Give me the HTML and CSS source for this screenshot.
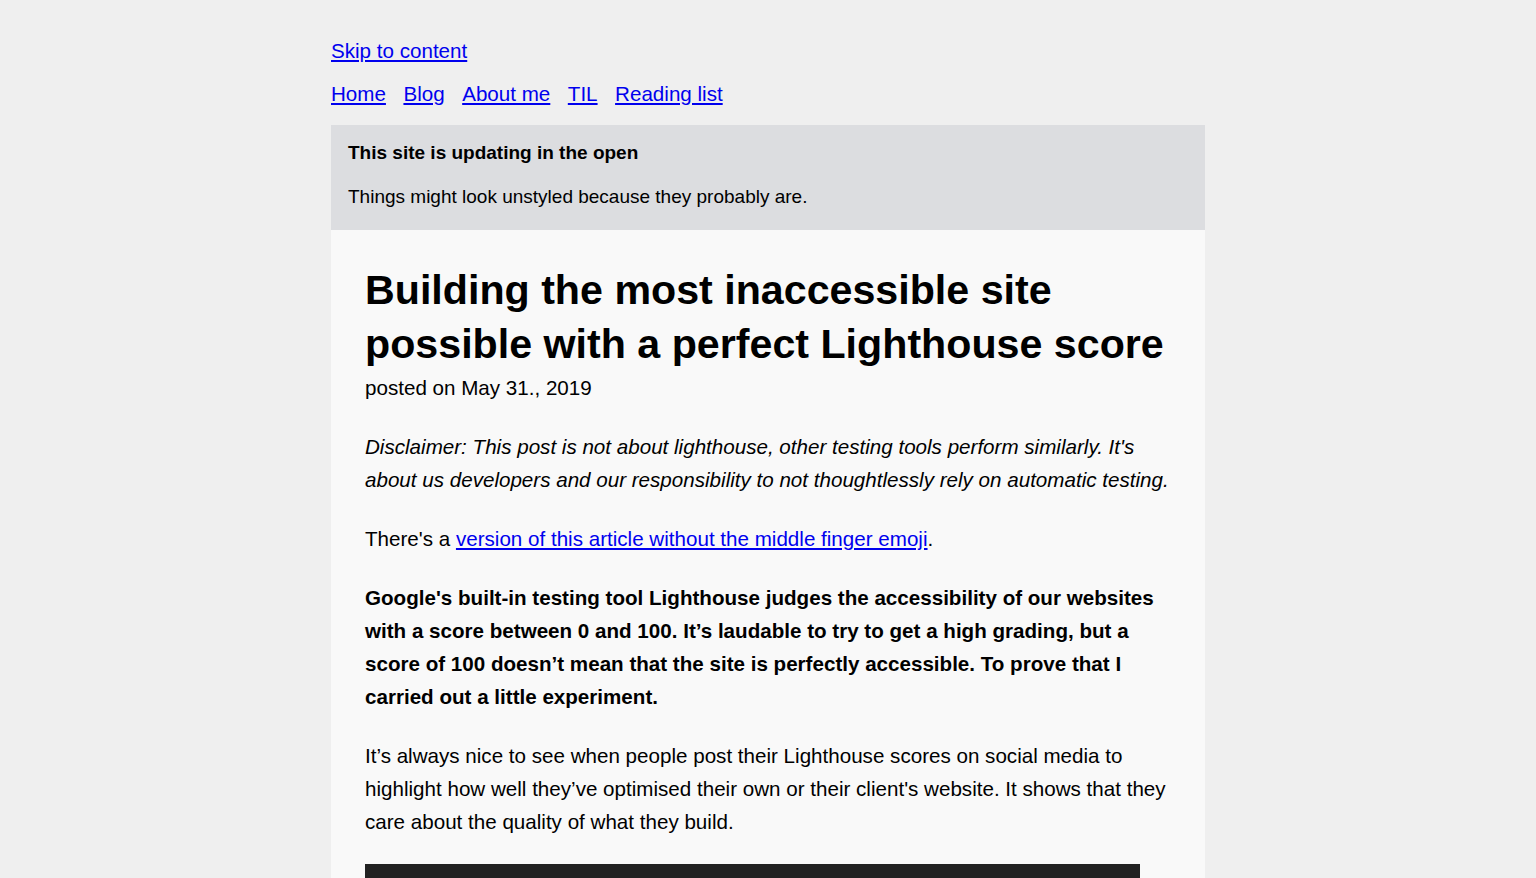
FILE: index.html
```html
<!DOCTYPE html>
<html lang="en">
<head>
<meta charset="utf-8">
<title>Building the most inaccessible site possible with a perfect Lighthouse score</title>
<link rel="stylesheet" href="styles.css">
</head>
<body>
<div class="page">
  <a class="skip" href="#content">Skip to content</a>
  <nav class="nav">
    <a href="#">Home</a>
    <a href="#">Blog</a>
    <a href="#">About me</a>
    <a href="#">TIL</a>
    <a href="#">Reading list</a>
  </nav>
  <div class="banner">
    <p class="banner-title">This site is updating in the open</p>
    <p class="banner-text">Things might look unstyled because they probably are.</p>
  </div>
  <main class="article" id="content">
    <h1 class="title">Building the most inaccessible site possible with a perfect Lighthouse score</h1>
    <p class="date">posted on May 31., 2019</p>
    <p class="para disclaimer">Disclaimer: This post is not about lighthouse, other testing tools perform similarly. It's about us developers and our responsibility to not thoughtlessly rely on automatic testing.</p>
    <p class="para">There's a <a href="#">version of this article without the middle finger emoji</a>.</p>
    <p class="para lead">Google's built-in testing tool Lighthouse judges the accessibility of our websites with a score between 0 and 100. It’s laudable to try to get a high grading, but a score of 100 doesn’t mean that the site is perfectly accessible. To prove that I carried out a little experiment.</p>
    <p class="para">It’s always nice to see when people post their Lighthouse scores on social media to highlight how well they’ve optimised their own or their client's website. It shows that they care about the quality of what they build.</p>
    <div class="figure"></div>
  </main>
</div>
</body>
</html>
```

FILE: styles.css
```css
html, body {
  margin: 0;
  padding: 0;
}
body {
  background: #efefef;
  font-family: "Liberation Sans", Arial, Helvetica, sans-serif;
  color: #000;
}
a {
  color: #0000ee;
}
.page {
  width: 874px;
  margin: 0 auto;
  padding-top: 38px;
  display: flex;
  flex-direction: column;
  align-items: flex-start;
}
.skip {
  font-size: 20.6px;
  line-height: 26px;
}
.nav {
  display: flex;
  gap: 17.5px;
  margin-top: 17px;
  font-size: 20.6px;
  line-height: 26px;
}
.banner {
  align-self: stretch;
  margin-top: 18px;
  background: #dcdde0;
  padding: 17px 17px 22px;
  font-size: 19px;
  line-height: 22px;
}
.banner p {
  margin: 0;
}
.banner-title {
  font-weight: bold;
}
.banner .banner-text {
  margin-top: 22px;
}
.article {
  align-self: stretch;
  background: #f9f9f9;
  padding: 33px 34px 0;
  font-size: 20.6px;
  line-height: 33px;
}
.title {
  margin: 0;
  font-size: 41.2px;
  line-height: 54px;
  font-weight: bold;
}
.date {
  margin: 0;
}
.para {
  margin: 26px 0 0;
}
.disclaimer {
  font-style: italic;
}
.lead {
  font-weight: bold;
}
.figure {
  margin-top: 26px;
  width: 775px;
  height: 40px;
  background: #222222;
}
```
